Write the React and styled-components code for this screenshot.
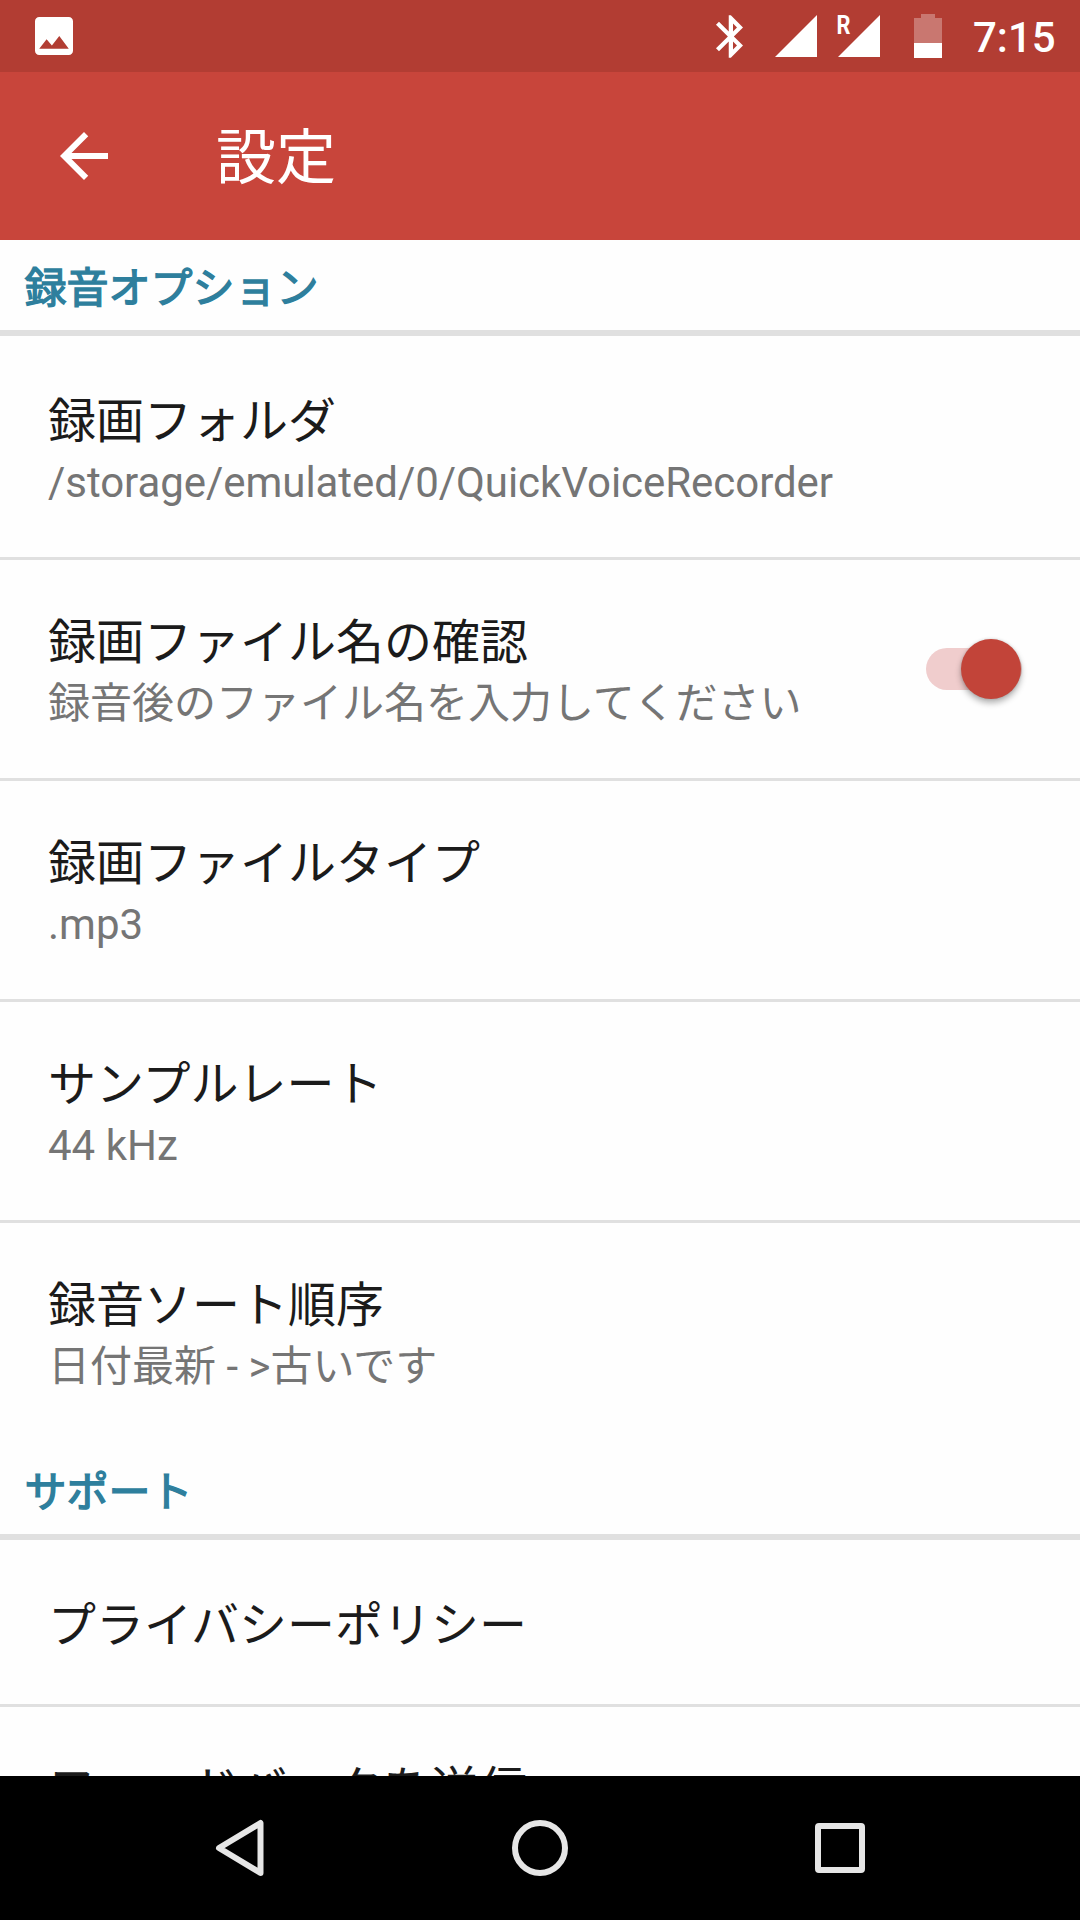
import React, { useState } from 'react';
import styled, { createGlobalStyle } from 'styled-components';

const GlobalStyle = createGlobalStyle`
  * {
    box-sizing: border-box;
  }

  body {
    margin: 0;
    background: #fefefe;
    font-family: Roboto, 'Noto Sans CJK JP', sans-serif;
  }
`;

const Screen = styled.div`
  display: flex;
  flex-direction: column;
  width: 1080px;
  height: 1920px;
  overflow: hidden;
  background: #fefefe;
`;

const StatusBar = styled.div`
  display: flex;
  align-items: center;
  flex: none;
  height: 72px;
  padding: 0 24px 0 35px;
  background: #b23d33;
  color: #fff;
`;

const StatusIcon = styled.svg`
  flex: none;
  display: block;
  overflow: visible;
  margin-left: ${({ $gap }) => $gap || 0}px;
`;

const Clock = styled.span`
  width: 83px;
  margin-left: 31px;
  padding-top: 3px;
  font-size: 42px;
  font-weight: 500;
  line-height: 72px;
  white-space: nowrap;
`;

const Spacer = styled.div`
  flex: 1;
`;

const AppBar = styled.header`
  display: flex;
  align-items: center;
  flex: none;
  height: 168px;
  padding: 0 48px;
  background: #c8453b;
  color: #fff;
`;

const BackButton = styled.button`
  width: 72px;
  height: 72px;
  margin: 0 96px 0 0;
  padding: 0;
  border: 0;
  background: none;
  color: inherit;

  svg {
    display: block;
  }
`;

const Title = styled.h1`
  margin: 0;
  padding-top: 5px;
  font-size: 60px;
  font-weight: 400;
  line-height: 72px;
`;

const Content = styled.main`
  flex: 1;
  min-height: 0;
  overflow: hidden;
`;

const SectionTitle = styled.h2`
  height: 96px;
  margin: 0;
  padding-left: 24.5px;
  border-bottom: 6px solid #e0e0e0;
  color: #2e7f9d;
  font-size: 42px;
  font-weight: 400;
  line-height: 98px;
  -webkit-text-stroke: 1.4px #2e7f9d;
`;

const List = styled.div`
  padding-top: 3px;
`;

const Row = styled.div`
  display: flex;
  align-items: center;
  justify-content: space-between;
  height: ${({ $short }) => ($short ? 164 : 221)}px;
  padding: 0 48px;
  border-bottom: 3px solid #e0e0e0;

  &:last-child {
    border-bottom-color: transparent;
  }
`;

const RowText = styled.div`
  display: flex;
  flex-direction: column;
  padding-top: ${({ $short }) => ($short ? 4 : 6)}px;
`;

const RowTitle = styled.span`
  color: #1b1b1b;
  font-size: 48px;
  line-height: 64px;
  white-space: nowrap;
`;

const RowSummary = styled.span`
  color: #757575;
  font-size: 42px;
  line-height: 58px;
  letter-spacing: ${({ $path }) => ($path ? '-0.05px' : 'normal')};
  white-space: nowrap;
`;

const Track = styled.button`
  position: relative;
  width: 96px;
  height: 42px;
  margin: 0 10px 1px 0;
  padding: 0;
  border: 0;
  border-radius: 21px;
  background: ${({ $on }) => ($on ? '#f0cdcd' : '#b9b9b9')};
`;

const Thumb = styled.span`
  position: absolute;
  top: -9px;
  left: ${({ $on }) => ($on ? 35 : -1)}px;
  width: 60px;
  height: 60px;
  border-radius: 50%;
  background: ${({ $on }) => ($on ? '#c24439' : '#f1f1f1')};
  box-shadow: 0 4px 6px rgba(0, 0, 0, 0.3), 0 0 3px rgba(0, 0, 0, 0.15);
`;

const NavBar = styled.nav`
  display: flex;
  align-items: center;
  justify-content: center;
  gap: 228px;
  flex: none;
  height: 144px;
  background: #000;

  svg {
    display: block;
    fill: none;
    stroke: #e6e6e6;
    stroke-width: 6;
    stroke-linejoin: round;
  }
`;

const recordingOptions = [
  { title: '録画フォルダ', summary: '/storage/emulated/0/QuickVoiceRecorder', path: true },
  { title: '録画ファイル名の確認', summary: '録音後のファイル名を入力してください', toggle: true },
  { title: '録画ファイルタイプ', summary: '.mp3' },
  { title: 'サンプルレート', summary: '44 kHz' },
  { title: '録音ソート順序', summary: '日付最新 - >古いです' },
];

const supportOptions = [
  { title: 'プライバシーポリシー' },
  { title: 'フィードバックを送信' },
];

const Switch = () => {
  const [on, setOn] = useState(true);
  return (
    <Track $on={on} role="switch" aria-checked={on} onClick={() => setOn(!on)}>
      <Thumb $on={on} />
    </Track>
  );
};

const Option = ({ option }) => (
  <Row $short={!option.summary}>
    <RowText $short={!option.summary}>
      <RowTitle>{option.title}</RowTitle>
      {option.summary && <RowSummary $path={option.path}>{option.summary}</RowSummary>}
    </RowText>
    {option.toggle && <Switch />}
  </Row>
);

const Section = ({ title, options }) => (
  <section>
    <SectionTitle>{title}</SectionTitle>
    <List>
      {options.map((option) => (
        <Option key={option.title} option={option} />
      ))}
    </List>
  </section>
);

const Status = () => (
  <StatusBar>
    <StatusIcon width="38" height="38" viewBox="3 3 18 18" fill="#fff">
      <path d="M21 19V5c0-1.100-.9-2-2-2H5c-1.100 0-2 .9-2 2v14c0 1.100.9 2 2 2h14c1.100 0 2-.9 2-2zM8.500 13.500l2.500 3.010L14.500 12l4.500 6H5l3.500-4.500z" />
    </StatusIcon>
    <Spacer />
    <StatusIcon width="27" height="43" viewBox="5 2 12.710 20" fill="#fff">
      <path d="M17.710 7.710L12 2h-1v7.590L6.410 5 5 6.410 10.590 12 5 17.590 6.410 19 11 14.410V22h1l5.710-5.710-4.300-4.290 4.300-4.290zM13 5.830l1.880 1.880L13 9.590V5.830zm1.880 10.460L13 18.170v-3.760l1.880 1.880z" />
    </StatusIcon>
    <StatusIcon $gap={32} width="42" height="42" viewBox="0 0 42 42" fill="#fff">
      <path d="M0 42L42 0v42z" />
    </StatusIcon>
    <StatusIcon $gap={21} width="42" height="42" viewBox="0 0 42 42" fill="#fff">
      <path d="M0 42L42 0v42z" />
      <text x="-1.5" y="19" fontSize="25" fontWeight="700" textLength="14" lengthAdjust="spacingAndGlyphs">
        R
      </text>
    </StatusIcon>
    <StatusIcon $gap={34} width="28" height="44" viewBox="0 0 28 44" fill="#fff">
      <path d="M7 0h14v4h7v25H0V4h7z" opacity="0.3" />
      <path d="M0 29h28v15H0z" />
    </StatusIcon>
    <Clock>7:15</Clock>
  </StatusBar>
);

const App = () => (
  <>
    <GlobalStyle />
    <Screen>
      <Status />
      <AppBar>
        <BackButton aria-label="戻る">
          <svg width="72" height="72" viewBox="0 0 24 24" fill="currentColor">
            <path d="M20 11H7.830l5.590-5.590L12 4l-8 8 8 8 1.410-1.410L7.830 13H20v-2z" />
          </svg>
        </BackButton>
        <Title>設定</Title>
      </AppBar>
      <Content>
        <Section title="録音オプション" options={recordingOptions} />
        <Section title="サポート" options={supportOptions} />
      </Content>
      <NavBar>
        <svg width="72" height="72" viewBox="0 0 72 72">
          <path d="M56.500 11v50L15 36z" />
        </svg>
        <svg width="72" height="72" viewBox="0 0 72 72">
          <circle cx="36" cy="36" r="25" />
        </svg>
        <svg width="72" height="72" viewBox="0 0 72 72">
          <rect x="14" y="14" width="44" height="44" rx="1" />
        </svg>
      </NavBar>
    </Screen>
  </>
);

export default App;
